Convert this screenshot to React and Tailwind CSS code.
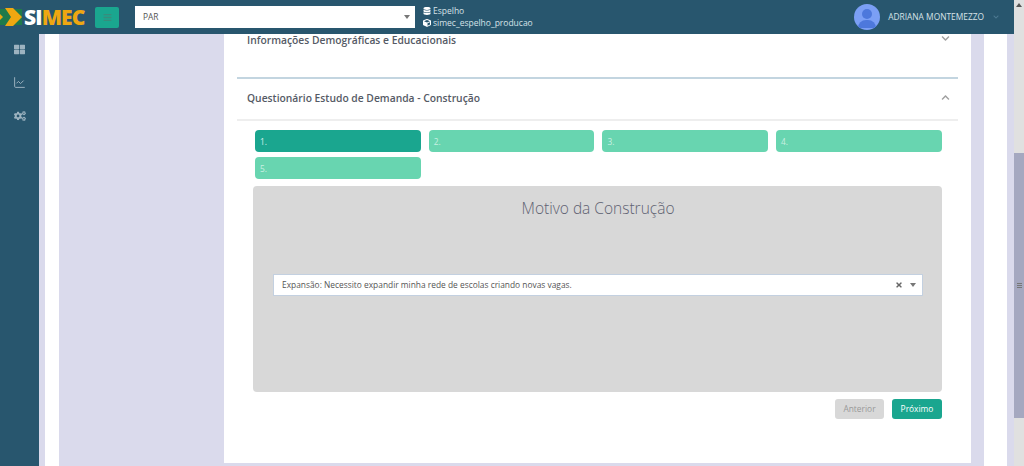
import { ChartLine } from 'lucide-react';
import { FaBars, FaThLarge, FaCogs, FaDatabase, FaCube, FaTimes, FaChevronDown, FaChevronUp } from 'react-icons/fa';

function Step({ label, active }) {
  return (
    <div className={`h-[22px] w-[165.5px] rounded-[4px] pl-[5px] text-[8.4px] leading-[23px] ${active ? 'bg-[#1aa68f] text-[#d7f0ea]' : 'bg-[#68d5b0] text-[#c8f0e2]'}`}>
      {label}
    </div>
  );
}

export default function App() {
  return (
    <div className="flex h-[466px] w-[1024px] overflow-hidden bg-white font-['Open_Sans',sans-serif] text-[#555a65]">
      <div className="flex w-[1014px] flex-col">

        {/* Topbar */}
        <header className="flex h-[34px] shrink-0 items-center bg-[#28566e]">
          <div className="flex w-[95px] items-center">
            <svg width="24" height="24" viewBox="0 0 24 24" className="shrink-0">
              <rect x="0" y="4" width="22" height="16" fill="#1f7a4a" />
              <path d="M5 3 L13 3 L22 12 L13 21 L5 21 L11 12 Z" fill="#efa711" />
              <path d="M0 9 L3 12 L0 15 Z" fill="#efa711" />
            </svg>
            <span className="text-[21px] leading-none font-extrabold tracking-[-0.9px]">
              <span className="text-white">SI</span><span className="text-[#efa711]">MEC</span>
            </span>
          </div>
          <button className="flex h-[21px] w-[24px] items-center justify-center rounded-[2px] bg-[#1aa68f]">
            <FaBars size={9} className="text-[#388c7c]" />
          </button>
          <div className="ml-[16px] flex h-[22px] w-[280px] items-center justify-between bg-white pr-[5px] pl-[8px] text-[8.4px] text-[#555]">
            <span>PAR</span>
            <span className="h-0 w-0 border-x-[3px] border-t-[4px] border-x-transparent border-t-[#777]" />
          </div>
          <div className="ml-[8px] flex flex-col text-[8.5px] leading-[12px] text-[#d7e2e8]">
            <div className="flex items-center gap-[2px]"><FaDatabase size={8} className="text-white" />Espelho</div>
            <div className="flex items-center gap-[2px]"><FaCube size={8} className="text-white" />simec_espelho_producao</div>
          </div>
          <div className="ml-auto flex items-center pr-[15px]">
            <div className="flex h-[26px] w-[26px] flex-col items-center overflow-hidden rounded-full bg-[#7b9ff5]">
              <div className="mt-[5px] h-[10px] w-[10px] rounded-full bg-[#4d78dc]" />
              <div className="mt-[1px] h-[8px] w-[18px] rounded-t-full bg-[#4d78dc]" />
            </div>
            <span className="ml-[8px] text-[8.4px] text-[#d7e2e8]">ADRIANA MONTEMEZZO</span>
            <FaChevronDown size={6} className="ml-[9px] text-[#4d7a92]" />
          </div>
        </header>

        <div className="flex min-h-0 flex-1">
          {/* Sidebar */}
          <aside className="flex w-[39px] shrink-0 flex-col items-center gap-[21px] bg-[#28566e] pt-[10px] text-[#9db3c0]">
            <FaThLarge size={11} />
            <ChartLine size={13} strokeWidth={1.8} />
            <FaCogs size={12} />
          </aside>

          <main className="flex min-w-0 flex-1 bg-[#dadaec] pr-[7px] pl-[6px]">
            <div className="flex flex-1 bg-white pr-[23px] pl-[14px]">
              <div className="flex flex-1 bg-[#dadaec] pr-[13px] pb-[3px] pl-[165px]">
                <div className="flex-1 bg-white">

                  {/* Closed section */}
                  <div className="flex h-[43px] items-start justify-between pr-[21px] pl-[23px]">
                    <h3 className="-mt-[1px] text-[10.3px] leading-[14px] font-semibold">Informações Demográficas e Educacionais</h3>
                    <FaChevronDown size={9} className="text-[#a0a0a0]" />
                  </div>

                  {/* Open section */}
                  <div className="mx-[13px] border-t-[2px] border-[#c3d5e0]">
                    <div className="flex h-[42px] items-center justify-between border-b-[2px] border-[#eeeeee] pr-[8px] pl-[10px]">
                      <h3 className="text-[10.3px] font-semibold">Questionário Estudo de Demanda - Construção</h3>
                      <FaChevronUp size={9} className="mb-[4px] text-[#a0a0a0]" />
                    </div>
                  </div>

                  <div className="pt-[9px] pr-[29px] pl-[31px]">
                    <div className="flex flex-wrap gap-x-[8.2px] gap-y-[5px]">
                      <Step label="1." active />
                      <Step label="2." />
                      <Step label="3." />
                      <Step label="4." />
                      <Step label="5." />
                    </div>

                    <div className="mt-[7px] -ml-[2px] h-[206px] w-[689px] rounded-[4px] bg-[#d8d8d8] pt-[11px] pr-[19px] pl-[20px]">
                      <h2 className="text-center text-[15.5px] leading-[22px] font-light text-[#5f6272]">Motivo da Construção</h2>
                      <div className="mt-[55px] flex h-[22px] items-center justify-between border border-[#c3d0e0] bg-white pr-[6px] pl-[8px] text-[8.4px] text-[#555]">
                        <span>Expansão: Necessito expandir minha rede de escolas criando novas vagas.</span>
                        <span className="flex items-center gap-[7px]">
                          <FaTimes size={8} className="text-[#666]" />
                          <span className="h-0 w-0 border-x-[3px] border-t-[4px] border-x-transparent border-t-[#777]" />
                        </span>
                      </div>
                    </div>

                    <div className="mt-[7px] flex justify-end gap-[8px]">
                      <button className="h-[20px] w-[49px] rounded-[3px] bg-[#d8d8d8] text-[8.4px] text-[#999]">Anterior</button>
                      <button className="h-[20px] w-[50px] rounded-[3px] bg-[#1aa68f] text-[8.4px] text-white">Próximo</button>
                    </div>
                  </div>
                </div>
              </div>
            </div>
          </main>
        </div>
      </div>

      {/* Scrollbar */}
      <div className="flex w-[10px] shrink-0 flex-col bg-[#e0e0e0]">
        <div className="flex h-[10px] items-center justify-center">
          <span className="h-0 w-0 border-x-[3px] border-b-[4px] border-x-transparent border-b-[#555]" />
        </div>
        <div className="mt-[143px] flex h-[265px] flex-col items-center justify-center gap-[1px] bg-[#a5a8c0]">
          <div className="h-px w-[5px] bg-[#777]" />
          <div className="h-px w-[5px] bg-[#777]" />
          <div className="h-px w-[5px] bg-[#777]" />
        </div>
      </div>
    </div>
  );
}
